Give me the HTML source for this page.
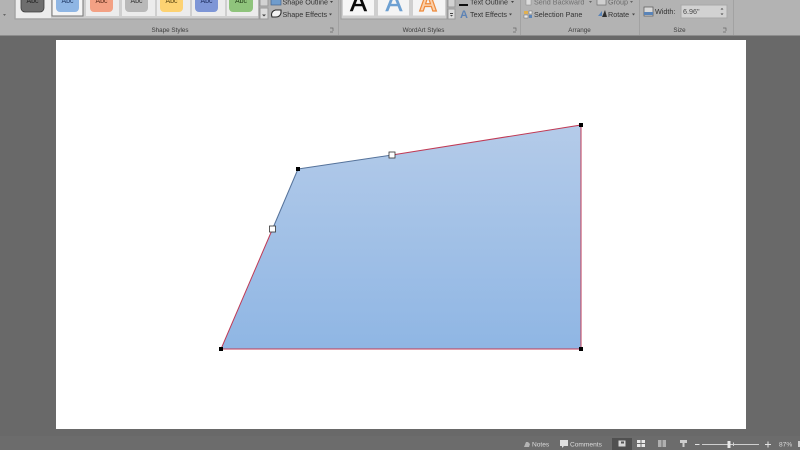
<!DOCTYPE html>
<html>
<head>
<meta charset="utf-8">
<style>
html,body{margin:0;padding:0;background:#696969}
body{width:800px;height:450px;overflow:hidden;position:relative}
svg{position:absolute;left:0;top:0;display:block;filter:blur(.35px)}
text{font-family:"Liberation Sans",sans-serif;font-size:7.2px;fill:#333}
.l{font-size:6.3px;fill:#3c3c3c}
.s{font-size:6.6px;fill:#dcdcdc}
.a{font-size:25px}
</style>
</head>
<body>
<svg width="800" height="450" viewBox="0 0 800 450" xmlns="http://www.w3.org/2000/svg">
<defs>
<linearGradient id="f" x1="0" y1="0" x2="0" y2="1">
<stop offset="0" stop-color="#b4cbe9"/>
<stop offset="1" stop-color="#8fb6e4"/>
</linearGradient>
</defs>
<rect width="800" height="450" fill="#696969"/>
<!-- ribbon -->
<rect width="800" height="35" fill="#b3b3b3"/>
<rect y="35" width="800" height="1" fill="#8d8d8d"/>
<!-- gallery -->
<rect x="15" y="-1" width="244" height="20" fill="#cfcfcf" stroke="#9c9c9c"/>
<rect x="16" y="0" width="35" height="18" fill="#ececec"/>
<rect x="52" y="-1" width="31" height="17" fill="#f4f4f4" stroke="#757575"/>
<rect x="86" y="0" width="33" height="16" fill="#ececec"/>
<rect x="122" y="0" width="33" height="16" fill="#ececec"/>
<rect x="157" y="0" width="33" height="16" fill="#ececec"/>
<rect x="192" y="0" width="33" height="16" fill="#ececec"/>
<rect x="227" y="0" width="31" height="16" fill="#ececec"/>
<rect x="21" y="-6" width="23" height="18" rx="4" fill="#6e6e6e" stroke="#3c3c3c" stroke-width=".8"/>
<rect x="56" y="-6" width="23" height="18" rx="4" fill="#8fb6e4"/>
<rect x="90" y="-6" width="23" height="18" rx="4" fill="#f3a184"/>
<rect x="125" y="-6" width="23" height="18" rx="4" fill="#b9b9b9"/>
<rect x="160" y="-6" width="23" height="18" rx="4" fill="#fdd272"/>
<rect x="195" y="-6" width="23" height="18" rx="4" fill="#7e96d6"/>
<rect x="229" y="-6" width="24" height="18" rx="4" fill="#8fc47c"/>
<text x="32.500" y="3" text-anchor="middle" style="font-size:7px;fill:#222">Abc</text>
<text x="67.500" y="3" text-anchor="middle" style="font-size:7px;fill:#1f3864">Abc</text>
<text x="101.500" y="3" text-anchor="middle" style="font-size:7px;fill:#5a2b1a">Abc</text>
<text x="136.500" y="3" text-anchor="middle" style="font-size:7px;fill:#333">Abc</text>
<text x="171.500" y="3" text-anchor="middle" style="font-size:7px;fill:#5a4510">Abc</text>
<text x="206.500" y="3" text-anchor="middle" style="font-size:7px;fill:#1f2f60">Abc</text>
<text x="241" y="3" text-anchor="middle" style="font-size:7px;fill:#24401a">Abc</text>
<rect x="260" y="-1" width="8" height="7" fill="#d2d2d2" stroke="#999"/>
<rect x="260" y="8" width="8" height="11" fill="#dcdcdc" stroke="#999"/>
<path d="M262 13h4M262 14.500h4l-2 2z" fill="#444"/>
<path d="M3 14h3l-1.500 2z" fill="#666"/>
<!-- shape outline / effects -->
<rect x="271" y="-3" width="10" height="8" fill="#6f9ccc" stroke="#44668e" stroke-width=".7"/>
<text x="282.500" y="4.500">Shape Outline</text>
<path d="M330 1h3l-1.500 2z" fill="#444"/>
<path d="M271.500 15q0-4 4-5h5.500v3q-1 4-5 4h-4z" fill="#f4f4f4" stroke="#2c2c2c" stroke-width="1.100"/>
<text x="282.500" y="17">Shape Effects</text>
<path d="M329 13.500h3l-1.500 2z" fill="#444"/>
<text x="170" y="32" text-anchor="middle" class="l">Shape Styles</text>
<path d="M330 28h3v3M333 32h-3" fill="none" stroke="#666" stroke-width=".7"/>
<rect x="338" y="0" width="1" height="35" fill="#a2a2a2"/>
<!-- wordart -->
<rect x="341" y="-1" width="106" height="20" fill="#cfcfcf" stroke="#9c9c9c"/>
<rect x="343" y="0" width="31" height="15.500" fill="#f6f6f6"/>
<rect x="378" y="0" width="31" height="15.500" fill="#f4f4f4"/>
<rect x="413" y="0" width="32" height="15.500" fill="#f4f4f4"/>
<text x="358.500" y="11" text-anchor="middle" class="a" style="fill:#0a0a0a;stroke:#0a0a0a;stroke-width:.6px">A</text>
<text x="394" y="11" text-anchor="middle" class="a" style="fill:#6da0d2;stroke:#6da0d2;stroke-width:.6px">A</text>
<text x="428" y="11" text-anchor="middle" class="a" style="font-weight:bold;fill:#fbd0aa;stroke:#ee8b3d;stroke-width:1.200px">A</text>
<rect x="448" y="-1" width="7" height="8" fill="#d2d2d2" stroke="#999"/>
<rect x="448" y="9" width="7" height="10" fill="#dcdcdc" stroke="#999"/>
<path d="M450 13h3v1h-3zM450 15h3l-1.500 1.500z" fill="#444"/>
<rect x="459" y="4" width="9" height="2" fill="#111"/>
<text x="470" y="4.500">Text Outline</text>
<path d="M511 1h3l-1.500 2z" fill="#444"/>
<text x="460" y="18" style="font-size:11px;fill:#5d83b5;font-weight:bold">A</text>
<text x="470" y="17">Text Effects</text>
<path d="M509 13.500h3l-1.500 2z" fill="#444"/>
<text x="423.500" y="32" text-anchor="middle" class="l">WordArt Styles</text>
<path d="M513 28h3v3M516 32h-3" fill="none" stroke="#666" stroke-width=".7"/>
<rect x="520" y="0" width="1" height="35" fill="#a2a2a2"/>
<!-- arrange -->
<rect x="526" y="-1" width="5" height="6" fill="#dcdcdc" stroke="#888" stroke-width=".5"/>
<text x="534" y="4.500" style="fill:#707070">Send Backward</text>
<path d="M589 1h3l-1.500 2z" fill="#666"/>
<rect x="597" y="-2" width="9" height="7" fill="#cfcfcf" stroke="#707070" stroke-width=".7"/>
<text x="608" y="4.500" style="fill:#6a6a6a">Group</text>
<path d="M630 1h3l-1.500 2z" fill="#666"/>
<rect x="524" y="11" width="4" height="3" fill="#e0b050"/>
<rect x="524" y="15" width="4" height="3" fill="#e8e8e8" stroke="#555" stroke-width=".4"/>
<rect x="529" y="11" width="3" height="3" fill="#efefef" stroke="#555" stroke-width=".4"/>
<rect x="529" y="15" width="3" height="3" fill="#5a84b8"/>
<text x="534" y="17">Selection Pane</text>
<path d="M598 16l4-5v5z" fill="#5a84b8"/>
<path d="M602 17l3-7 2 7z" fill="#2f2f2f"/>
<text x="608" y="17">Rotate</text>
<path d="M632 13.500h3l-1.500 2z" fill="#444"/>
<text x="579.500" y="32" text-anchor="middle" class="l">Arrange</text>
<rect x="639" y="0" width="1" height="35" fill="#a2a2a2"/>
<!-- size -->
<rect x="644" y="7" width="9" height="9" fill="#d8d8d8" stroke="#555" stroke-width=".7"/>
<rect x="644" y="12" width="9" height="3" fill="#5a84b8"/>
<text x="655" y="14">Width:</text>
<rect x="681" y="5" width="46" height="13" fill="#d2d2d2" stroke="#a8a8a8"/>
<text x="683" y="14" style="fill:#4a4a4a">6.96"</text>
<path d="M720.500 9.500l1.500-1.500 1.500 1.500zM720.500 13.500l1.500 1.500 1.500-1.500z" fill="#444"/>
<text x="679.500" y="32" text-anchor="middle" class="l">Size</text>
<path d="M723 28h3v3M726 32h-3" fill="none" stroke="#666" stroke-width=".7"/>
<rect x="733" y="0" width="1" height="35" fill="#a2a2a2"/>
<!-- slide -->
<rect x="56" y="40" width="690" height="389" fill="#ffffff"/>
<!-- shape -->
<path d="M221 349L272.500 229L298 169L392 155L581 125V349Z" fill="url(#f)"/>
<path d="M298 169L392 155" fill="none" stroke="#55729a" stroke-width="1"/>
<path d="M272.500 229L298 169" fill="none" stroke="#55729a" stroke-width="1"/>
<path d="M392 155L581 125V349H221L272.500 229" fill="none" stroke="#c03a55" stroke-width="1"/>
<rect x="296" y="167" width="4" height="4" fill="#000"/>
<rect x="579" y="123" width="4" height="4" fill="#000"/>
<rect x="219" y="347" width="4" height="4" fill="#000"/>
<rect x="579" y="347" width="4" height="4" fill="#000"/>
<rect x="389" y="152" width="6" height="6" fill="#fff" stroke="#333" stroke-width=".8"/>
<rect x="269.500" y="226" width="6" height="6" fill="#fff" stroke="#333" stroke-width=".8"/>
<!-- status bar -->
<rect y="436" width="800" height="14" fill="#6c6c6c"/>
<path d="M524 447l2-5h2l2 2-1 3h-4z" fill="#b4b4b4"/>
<text x="532" y="446.500" class="s">Notes</text>
<path d="M560 440h8v6h-4l-2 2v-2h-2z" fill="#e0e0e0"/>
<text x="570" y="446.500" class="s">Comments</text>
<rect x="612" y="438" width="20" height="12" fill="#505050"/>
<rect x="618.500" y="440.500" width="7" height="6" fill="#d8d8d8"/>
<rect x="621" y="441.500" width="3" height="2" fill="#555"/>
<rect x="637" y="440" width="3.500" height="3" fill="#e8e8e8"/><rect x="641.500" y="440" width="3.500" height="3" fill="#e8e8e8"/>
<rect x="637" y="444" width="3.500" height="3" fill="#e8e8e8"/><rect x="641.500" y="444" width="3.500" height="3" fill="#e8e8e8"/>
<rect x="658" y="440" width="8" height="7" fill="#b0b0b0"/>
<rect x="661.500" y="440" width="1" height="7" fill="#6c6c6c"/>
<path d="M680 440h7v3h-2.500v4h-2v-4H680z" fill="#cfcfcf"/>
<rect x="695" y="444" width="4.500" height="1" fill="#e4e4e4"/>
<rect x="702" y="444" width="57" height="1" fill="#cfcfcf"/>
<rect x="727.500" y="441" width="3" height="7" fill="#e8e8e8"/>
<rect x="733" y="442.500" width="1" height="3.500" fill="#cfcfcf"/>
<path d="M765 444.500h6M768 441.500v6" stroke="#e4e4e4" stroke-width="1"/>
<text x="779" y="446.500" class="s">87%</text>
<rect x="798" y="441" width="2" height="6" fill="#cfcfcf"/>
</svg>
</body>
</html>
